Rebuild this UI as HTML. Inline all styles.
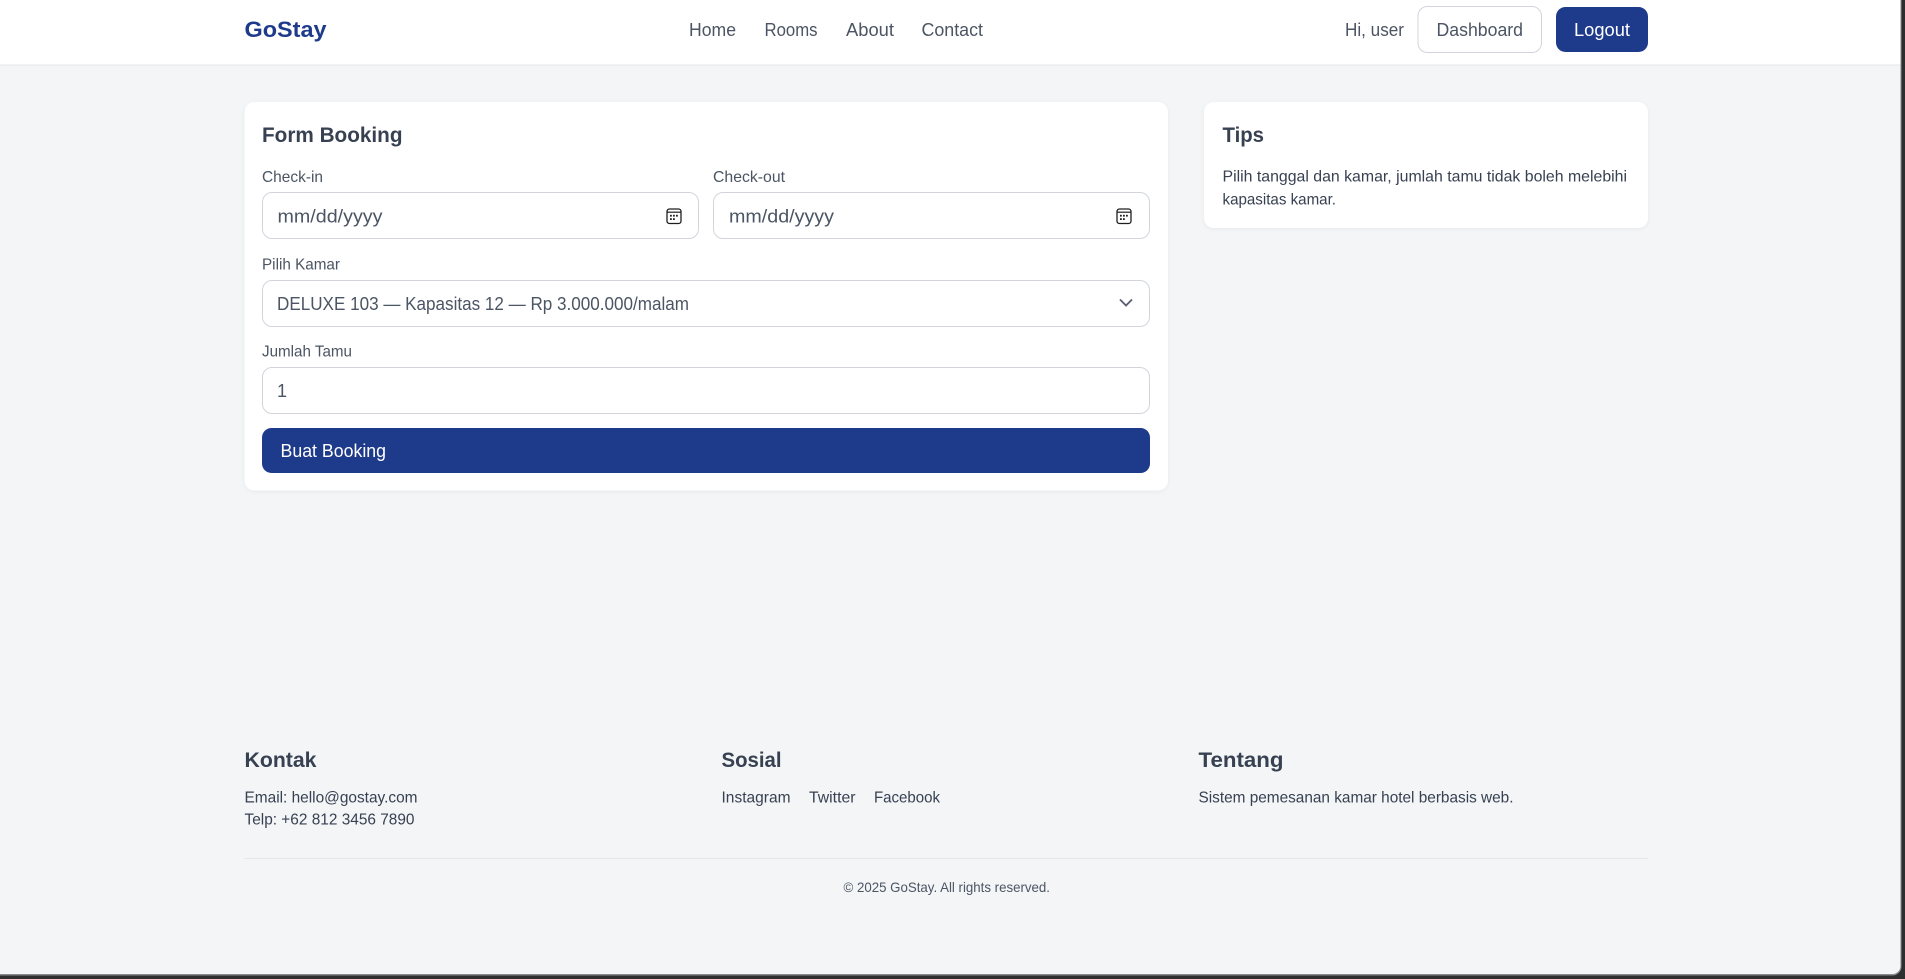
<!DOCTYPE html>
<html lang="id">
<head>
<meta charset="utf-8">
<title>GoStay - Form Booking</title>
<style>
html,body{margin:0;padding:0;width:1905px;height:979px;overflow:hidden;background:#2e2e2e}
svg{display:block}
text{font-family:"Liberation Sans",Arial,sans-serif;fill:#374151;font-size:16px}
.h{font-weight:700;fill:#374151;font-size:21px}
.n{font-size:18px;fill:#4b5563}
.f{font-size:18px;fill:#4b5563}
</style>
</head>
<body>
<svg xmlns="http://www.w3.org/2000/svg" width="1905" height="979" viewBox="0 0 1905 979">
<defs>
<filter id="s" x="-5%" y="-10%" width="110%" height="120%"><feDropShadow dx="0" dy="1" stdDeviation="2" flood-color="#000" flood-opacity=".05"/></filter>
<g id="cal">
<rect x="1" y="1" width="14" height="14.5" rx="2.4" fill="none" stroke="#1f1f1f" stroke-width="1.3"/>
<path d="M1 4.2h14" stroke="#1f1f1f" stroke-width="1.2"/>
<rect x="4" y="6.8" width="1.8" height="1.8" fill="#1f1f1f"/><rect x="7" y="6.8" width="1.8" height="1.8" fill="#1f1f1f"/><rect x="10" y="6.8" width="1.8" height="1.8" fill="#1f1f1f"/>
<rect x="4" y="10.2" width="1.8" height="1.8" fill="#1f1f1f"/><rect x="7" y="10.2" width="1.8" height="1.8" fill="#1f1f1f"/>
</g>
</defs>

<!-- window -->
<rect width="1905" height="979" fill="#2e2e2e"/>
<rect x="-20" y="-10" width="1921.5" height="985.5" rx="9" fill="#8a8a8a"/>
<rect x="-20" y="-10" width="1920.5" height="984" rx="8" fill="#f3f5f7"/>

<!-- header -->
<rect width="1900.5" height="65" fill="#fff"/>
<rect y="64.5" width="1900.5" height="1" fill="#e5e7eb"/>
<text x="244.5" y="37" textLength="82" lengthAdjust="spacingAndGlyphs" style="font-size:22.5px;font-weight:700;fill:#1e3a8a">GoStay</text>
<text class="n" x="689" y="36" textLength="47" lengthAdjust="spacingAndGlyphs">Home</text>
<text class="n" x="764.5" y="36" textLength="53" lengthAdjust="spacingAndGlyphs">Rooms</text>
<text class="n" x="846" y="36" textLength="48" lengthAdjust="spacingAndGlyphs">About</text>
<text class="n" x="921.5" y="36" textLength="61.5" lengthAdjust="spacingAndGlyphs">Contact</text>
<text class="n" x="1345" y="36" textLength="59" lengthAdjust="spacingAndGlyphs">Hi, user</text>
<rect x="1418" y="6.5" width="123.5" height="46" rx="9.5" fill="#fff" stroke="#d1d5db" stroke-width="1"/>
<text class="n" x="1436.5" y="36" textLength="86.5" lengthAdjust="spacingAndGlyphs">Dashboard</text>
<rect x="1556" y="7" width="92" height="45" rx="9.5" fill="#1e3a8a"/>
<text class="n" x="1574" y="36" textLength="56" lengthAdjust="spacingAndGlyphs" style="fill:#fff">Logout</text>

<!-- booking card -->
<rect x="244.5" y="102" width="923.5" height="388.5" rx="10" fill="#fff" filter="url(#s)"/>
<text class="h" x="262" y="142" textLength="140.5" lengthAdjust="spacingAndGlyphs">Form Booking</text>

<text x="262" y="182" textLength="61" lengthAdjust="spacingAndGlyphs" style="fill:#4b5563">Check-in</text>
<rect x="262.5" y="192.5" width="436" height="46" rx="9.5" fill="#fff" stroke="#d1d5db" stroke-width="1"/>
<text class="f" x="277.5" y="222.5" textLength="105" lengthAdjust="spacingAndGlyphs">mm/dd/yyyy</text>
<use href="#cal" x="666" y="208"/>

<text x="713" y="182" textLength="72" lengthAdjust="spacingAndGlyphs" style="fill:#4b5563">Check-out</text>
<rect x="713.5" y="192.5" width="436" height="46" rx="9.5" fill="#fff" stroke="#d1d5db" stroke-width="1"/>
<text class="f" x="729" y="222.5" textLength="105" lengthAdjust="spacingAndGlyphs">mm/dd/yyyy</text>
<use href="#cal" x="1116" y="208"/>

<text x="262" y="269.5" textLength="78" lengthAdjust="spacingAndGlyphs" style="fill:#4b5563">Pilih Kamar</text>
<rect x="262.5" y="280.5" width="887" height="46" rx="9.5" fill="#fff" stroke="#d1d5db" stroke-width="1"/>
<text class="n" x="277" y="310" textLength="412" lengthAdjust="spacingAndGlyphs" style="font-size:18.5px">DELUXE 103 — Kapasitas 12 — Rp 3.000.000/malam</text>
<path d="M1120 299.5l6 6 6-6" fill="none" stroke="#5b6170" stroke-width="1.9"/>

<text x="262" y="356.5" textLength="90" lengthAdjust="spacingAndGlyphs" style="fill:#4b5563">Jumlah Tamu</text>
<rect x="262.5" y="367.5" width="887" height="46" rx="9.5" fill="#fff" stroke="#d1d5db" stroke-width="1"/>
<text class="f" x="277" y="397">1</text>

<rect x="262" y="428" width="888" height="45" rx="9.5" fill="#1e3a8a"/>
<text class="n" x="280.5" y="457" textLength="105.5" lengthAdjust="spacingAndGlyphs" style="fill:#fff">Buat Booking</text>

<!-- tips card -->
<rect x="1204" y="102" width="444" height="126" rx="10" fill="#fff" filter="url(#s)"/>
<text class="h" x="1222.5" y="142" textLength="41.5" lengthAdjust="spacingAndGlyphs">Tips</text>
<text x="1222.5" y="181.5" textLength="404.5" lengthAdjust="spacingAndGlyphs">Pilih tanggal dan kamar, jumlah tamu tidak boleh melebihi</text>
<text x="1222.5" y="204.5" textLength="113.5" lengthAdjust="spacingAndGlyphs">kapasitas kamar.</text>

<!-- footer -->
<text class="h" x="244.5" y="767" textLength="72" lengthAdjust="spacingAndGlyphs">Kontak</text>
<text x="244.5" y="802.5" textLength="173" lengthAdjust="spacingAndGlyphs">Email: hello@gostay.com</text>
<text x="244.5" y="824.5" textLength="170" lengthAdjust="spacingAndGlyphs">Telp: +62 812 3456 7890</text>

<text class="h" x="721.5" y="767" textLength="60" lengthAdjust="spacingAndGlyphs">Sosial</text>
<text x="721.5" y="802.5" textLength="69" lengthAdjust="spacingAndGlyphs">Instagram</text>
<text x="809" y="802.5" textLength="46.5" lengthAdjust="spacingAndGlyphs">Twitter</text>
<text x="874" y="802.5" textLength="66" lengthAdjust="spacingAndGlyphs">Facebook</text>

<text class="h" x="1198.5" y="767" textLength="85" lengthAdjust="spacingAndGlyphs">Tentang</text>
<text x="1198.5" y="802.5" textLength="315" lengthAdjust="spacingAndGlyphs">Sistem pemesanan kamar hotel berbasis web.</text>

<rect x="244.5" y="858" width="1403.5" height="1" fill="#e5e7eb"/>
<text x="843.5" y="892" textLength="206.5" lengthAdjust="spacingAndGlyphs" style="font-size:14px;fill:#4b5563">© 2025 GoStay. All rights reserved.</text>
</svg>
</body>
</html>
